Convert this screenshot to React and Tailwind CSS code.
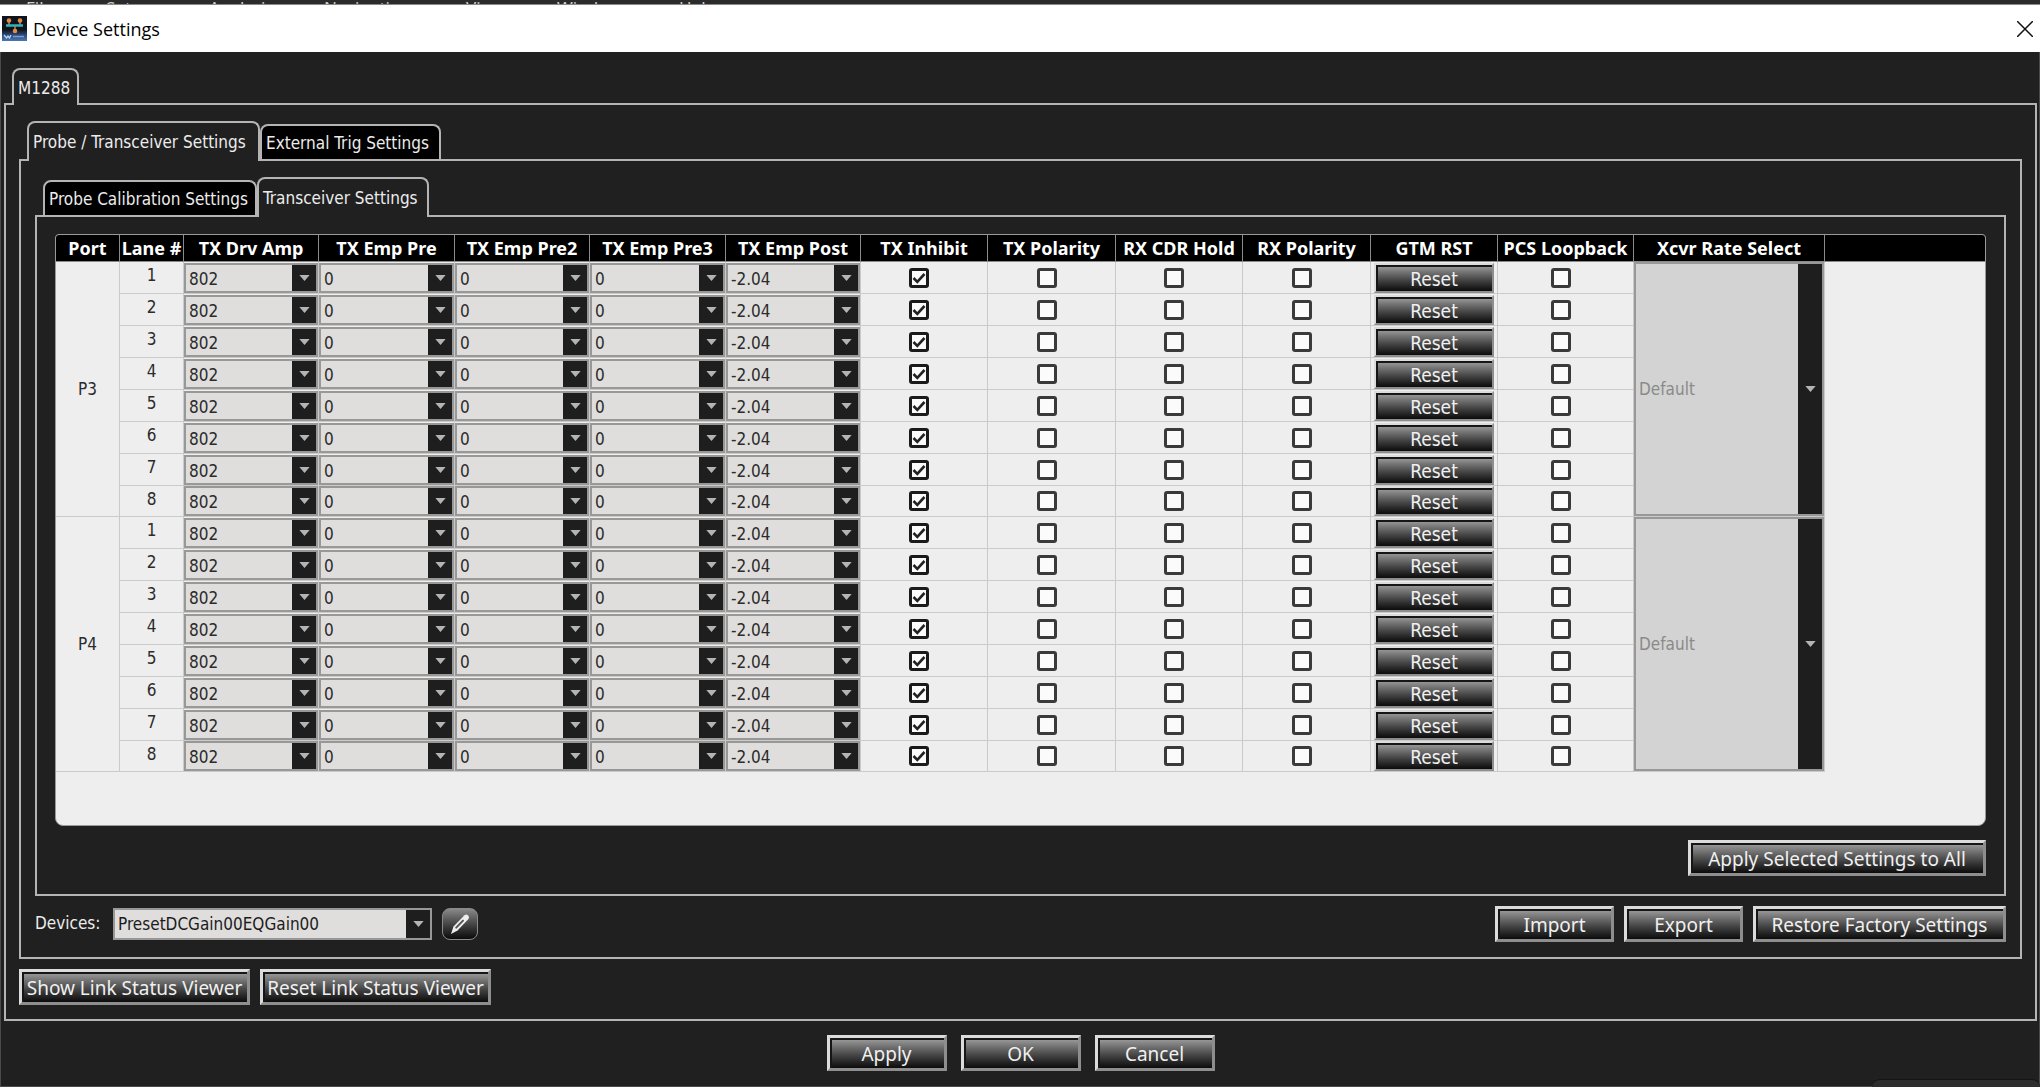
const MENUS = [
  ['File', 'w-20'],
  ['Setup', 'w-[103px]'],
  ['Analysis', 'w-[115px]'],
  ['Navigation', 'w-[142px]'],
  ['View', 'w-[91px]'],
  ['Window', 'w-[122px]'],
  ['Help', 'w-20'],
]

const COLUMNS = [
  ['Port', 'w-16'],
  ['Lane #', 'w-16'],
  ['TX Drv Amp', 'w-[135px]'],
  ['TX Emp Pre', 'w-[136px]'],
  ['TX Emp Pre2', 'w-[135px]'],
  ['TX Emp Pre3', 'w-[136px]'],
  ['TX Emp Post', 'w-[135px]'],
  ['TX Inhibit', 'w-[127px]'],
  ['TX Polarity', 'w-[128px]'],
  ['RX CDR Hold', 'w-[127px]'],
  ['RX Polarity', 'w-[128px]'],
  ['GTM RST', 'w-[127px]'],
  ['PCS Loopback', 'w-[136px]'],
  ['Xcvr Rate Select', 'w-[191px]'],
]

const PORTS = ['P3', 'P4']
const LANES = [1, 2, 3, 4, 5, 6, 7, 8]

const DRIVES = [
  ['TX Drv Amp', '802'],
  ['TX Emp Pre', '0'],
  ['TX Emp Pre2', '0'],
  ['TX Emp Pre3', '0'],
  ['TX Emp Post', '-2.04'],
]

function AppIcon() {
  return (
    <svg viewBox="0 0 25 25" className="size-[25px]" aria-hidden="true">
      <defs>
        <linearGradient id="appbg" x1="0" y1="0" x2="0" y2="1">
          <stop offset="0.55" stopColor="#10141a" />
          <stop offset="0.75" stopColor="#2b4878" />
          <stop offset="1" stopColor="#4a76b8" />
        </linearGradient>
      </defs>
      <rect width="25" height="25" fill="url(#appbg)" />
      <path d="M7 5v5M18 5v5M13 10v5" stroke="#c77a45" strokeWidth="1.5" />
      <path d="M4 9.5h17" stroke="#2fb3bd" strokeWidth="2.5" />
      <circle cx="7" cy="4.5" r="2.3" fill="#e08a4c" />
      <circle cx="18" cy="4.5" r="2.3" fill="#e08a4c" />
      <circle cx="13" cy="15" r="2.3" fill="#e08a4c" />
      <path d="M2 19l2.5 3L6 20l1.5 2L9 19" stroke="#c3d2ea" strokeWidth="1.3" fill="none" />
      <path d="M11 20.5h11" stroke="#7d9cc8" strokeWidth="1.5" />
    </svg>
  )
}

function PencilIcon() {
  return (
    <svg viewBox="0 0 24 24" className="size-6" aria-hidden="true">
      <path d="M3 22l2.5-7.5L16.5 3.2q1.8-1.5 3.6.2t.4 3.6L9.5 18.5z" fill="#eee" />
      <path d="M8.2 15.6L15 8.6" stroke="#555" strokeWidth="2" strokeLinecap="round" />
    </svg>
  )
}

function Combo({ label, value, className, boxClass, disabled }) {
  return (
    <div className={`flex relative border-2 border-[#989898] ${className}`}>
      <select
        aria-label={label}
        disabled={disabled}
        className={`flex-1 min-w-0 appearance-none outline-none rounded-none pl-[3px] pt-0.5 text-[17px] opacity-100 ${boxClass}`}
      >
        <option>{value}</option>
      </select>
      <span className="w-6 bg-[#1e1e1e] flex items-center justify-center pointer-events-none">
        <svg viewBox="0 0 12 7" className="w-[11px] h-1.5" aria-hidden="true">
          <path d="M0 0h12L6 7z" fill="#b4b4b4" />
        </svg>
      </span>
    </div>
  )
}

function Check({ label, checked }) {
  return (
    <td className="border-r border-b border-[#cacaca] p-0 pr-2.5">
      <label className="grid place-items-center">
        <input
          type="checkbox"
          aria-label={label}
          defaultChecked={checked}
          className="peer appearance-none size-5 rounded-[3px] border-3 border-[#3a3a3a] checked:border-[#1a1a1a] bg-[#fbfbfb] [grid-area:1/1]"
        />
        <svg viewBox="0 0 14 14" className="size-3.5 hidden peer-checked:block [grid-area:1/1] pointer-events-none" aria-hidden="true">
          <path d="M1.5 7l3.8 3.8L12.5 3" stroke="#222" strokeWidth="2.6" fill="none" />
        </svg>
      </label>
    </td>
  )
}

function Button({ children, className = 'border-3' }) {
  return (
    <button
      type="button"
      className={`border-t-[#dcdcdc] border-l-[#dcdcdc] border-r-[#8e8e8e] border-b-[#8e8e8e] bg-linear-to-b from-[#a2a2a2] to-[#0c0c0c] text-[#f0f0f0] text-[19px] leading-6 pt-px shadow-[inset_2px_2px_0_#161616] whitespace-nowrap ${className}`}
    >
      {children}
    </button>
  )
}

function Tab({ children, active, className }) {
  return (
    <button
      type="button"
      role="tab"
      aria-selected={!!active}
      className={`border-2 border-[#b4b4b4] border-b-0 rounded-t-lg text-[#ececec] text-[17px] leading-5 pl-1 text-left font-['DejaVu_Sans_Condensed','DejaVu_Sans',sans-serif] whitespace-nowrap ${active ? 'bg-[#202020] relative' : 'bg-black mb-0.5'} ${className}`}
    >
      {children}
    </button>
  )
}

function LaneRow({ port, lane }) {
  const last = lane === LANES.length
  const cell = 'border-r border-b border-[#cacaca] p-0'
  return (
    <tr className={last ? 'h-[31px]' : 'h-8'}>
      {lane === 1 && <td rowSpan={8} className={`${cell} pt-0.5 text-center`}>{port}</td>}
      <td className={`${cell} text-center leading-[26px] align-top`}>{lane}</td>
      {DRIVES.map(([name, value]) => (
        <td key={name} className={`${cell} align-bottom`}>
          <Combo label={`${name} ${port} lane ${lane}`} value={value} className="h-[30px]" boxClass="bg-[#dfdedd] text-[#2b2b2b]" />
        </td>
      ))}
      <Check label={`TX Inhibit ${port} lane ${lane}`} checked />
      <Check label={`TX Polarity ${port} lane ${lane}`} />
      <Check label={`RX CDR Hold ${port} lane ${lane}`} />
      <Check label={`RX Polarity ${port} lane ${lane}`} />
      <td className={`${cell} px-[3px] align-bottom`}>
        <Button className="border-2 h-[30px] w-full block">Reset</Button>
      </td>
      <Check label={`PCS Loopback ${port} lane ${lane}`} />
      {lane === 1 && (
        <td rowSpan={8} className={cell}>
          <Combo label={`Xcvr Rate Select ${port}`} value="Default" disabled className="h-[254px]" boxClass="bg-[#d3d3d3] text-[#8a8a8a]" />
        </td>
      )}
      {lane === 1 && <td rowSpan={8} />}
    </tr>
  )
}

function LaneTable() {
  return (
    <div className="border border-[#9a9a9a] bg-[#eee] rounded-t-sm rounded-b-lg overflow-hidden pb-[53px]">
      <table className="w-full table-fixed border-separate border-spacing-0 text-[17px] text-[#2b2b2b] font-['DejaVu_Sans_Condensed','DejaVu_Sans',sans-serif]">
        <thead>
          <tr className="h-[27px] bg-black text-white text-lg leading-6 font-['Noto_Sans',sans-serif]">
            {COLUMNS.map(([name, width]) => (
              <th key={name} scope="col" className={`${width} p-0 font-bold border-r border-b border-[#8a8a8a] whitespace-nowrap`}>{name}</th>
            ))}
            <td className="border-b border-[#8a8a8a]" />
          </tr>
        </thead>
        <tbody>
          {PORTS.map(port => LANES.map(lane => <LaneRow key={`${port}-${lane}`} port={port} lane={lane} />))}
        </tbody>
      </table>
    </div>
  )
}

export default function App() {
  return (
    <div className="min-h-screen relative flex flex-col bg-[#202020] font-['Noto_Sans',sans-serif]">
      <nav className="h-1 overflow-hidden bg-[#2b2b2b] pl-[26px] flex text-[17px] leading-4 text-[#d0d0d0]">
        {MENUS.map(([name, width]) => <span key={name} className={`${width} shrink-0`}>{name}</span>)}
      </nav>
      <header className="h-12 bg-white flex items-center border-t border-[#8a8a8a] pl-0.5 pr-[7px] gap-1.5">
        <AppIcon />
        <h1 className="flex-1 text-lg leading-6 text-black font-['Open_Sans','Noto_Sans',sans-serif]">Device Settings</h1>
        <button type="button" aria-label="Close">
          <svg viewBox="0 0 16 16" className="size-4" aria-hidden="true">
            <path d="M0 0l16 16M16 0L0 16" stroke="#111" strokeWidth="1.5" />
          </svg>
        </button>
      </header>

      <main className="flex-1 flex flex-col border-x border-b border-[#4a4a4a] pt-4 pl-[3px] pr-0.5">
        <div role="tablist" className="flex pl-2 -mb-0.5">
          <Tab active className="h-[37px] w-[67px]">M1288</Tab>
        </div>
        <section className="border-2 border-[#b4b4b4] px-[13px] pt-4 pb-3.5">
          <div role="tablist" className="flex items-end pl-2 -mb-0.5">
            <Tab active className="h-10 w-[233px]">Probe / Transceiver Settings</Tab>
            <Tab className="h-[35px] w-[181px]">External Trig Settings</Tab>
          </div>
          <div className="border-2 border-[#b4b4b4] px-3.5 pt-4 pb-[15px]">
            <div role="tablist" className="flex items-end pl-2 -mb-0.5">
              <Tab className="h-[35px] w-[214px]">Probe Calibration Settings</Tab>
              <Tab active className="h-10 w-[172px]">Transceiver Settings</Tab>
            </div>
            <div className="border-2 border-[#b4b4b4] px-[18px] pt-[17px] pb-[18px]">
              <LaneTable />
              <div className="flex justify-end mt-3.5">
                <Button className="border-3 h-9 w-[298px]">Apply Selected Settings to All</Button>
              </div>
            </div>
            <div className="flex items-center mt-2.5 h-9">
              <span className="w-[78px] text-[17px] text-[#ececec] font-['DejaVu_Sans_Condensed','DejaVu_Sans',sans-serif]">Devices:</span>
              <Combo label="Devices" value="PresetDCGain00EQGain00" className="h-8 w-[319px] font-['DejaVu_Sans_Condensed','DejaVu_Sans',sans-serif]" boxClass="bg-[#dfdedd] text-[#1c1c1c]" />
              <button type="button" aria-label="Edit device" className="ml-2.5 h-8 w-9 rounded-lg border border-[#8a8a8a] bg-linear-to-b from-[#8a8a8a] to-[#0c0c0c] flex items-center justify-center">
                <PencilIcon />
              </button>
              <div className="ml-auto flex gap-2.5">
                <Button className="border-3 h-9 w-[119px]">Import</Button>
                <Button className="border-3 h-9 w-[119px]">Export</Button>
                <Button className="border-3 h-9 w-[253px]">Restore Factory Settings</Button>
              </div>
            </div>
          </div>
          <div className="flex gap-2.5 mt-2.5">
            <Button className="border-3 h-9 w-[231px]">Show Link Status Viewer</Button>
            <Button className="border-3 h-9 w-[231px]">Reset Link Status Viewer</Button>
          </div>
        </section>
        <footer className="flex justify-center gap-3.5 pt-3.5">
          <Button className="border-3 h-9 w-[120px]">Apply</Button>
          <Button className="border-3 h-9 w-[120px]">OK</Button>
          <Button className="border-3 h-9 w-[120px]">Cancel</Button>
        </footer>
      </main>
      <div className="absolute right-0 bottom-0 w-[168px] h-2 rounded-t-lg border-t border-[#141414] bg-[#2d2d2d]" />
    </div>
  )
}
